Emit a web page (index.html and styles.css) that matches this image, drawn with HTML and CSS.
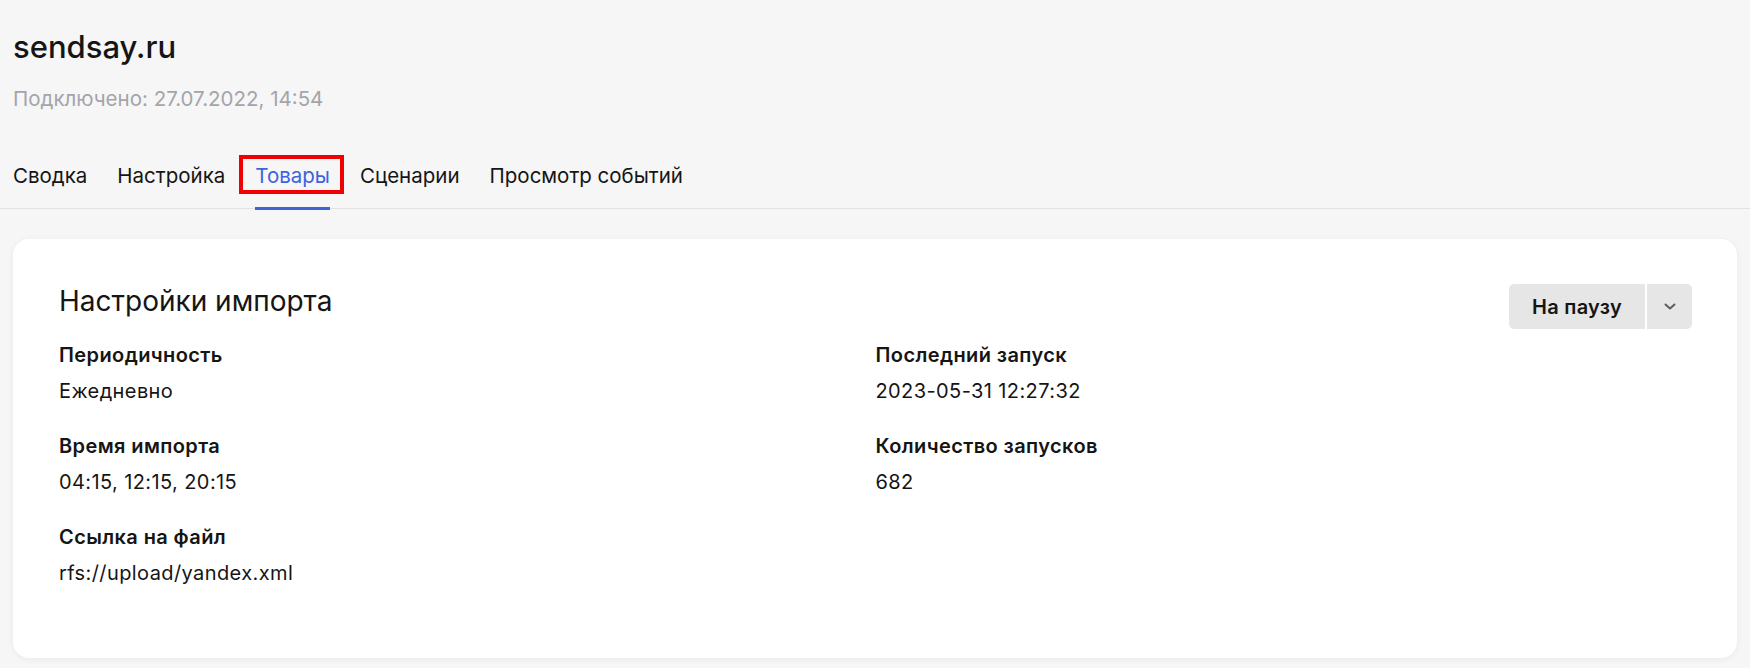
FILE: index.html
```html
<!DOCTYPE html>
<html lang="ru">
<head>
  <meta charset="UTF-8">
  <title>sendsay.ru — Товары</title>
  <link rel="stylesheet" href="styles.css">
</head>
<body>

  <!-- Шапка интеграции -->
  <header class="page-head">
    <h1 class="site-name">sendsay.ru</h1>
    <div class="connected">Подключено: 27.07.2022, 14:54</div>
  </header>

  <nav class="tabs">
    <a class="tab"><span class="tab-label">Сводка</span></a>
    <a class="tab"><span class="tab-label">Настройка</span></a>
    <a class="tab active"><span class="tab-label marked">Товары</span></a>
    <a class="tab"><span class="tab-label">Сценарии</span></a>
    <a class="tab"><span class="tab-label">Просмотр событий</span></a>
  </nav>

  <main class="content">
    <section class="card">
      <div class="card-head">
        <h2 class="card-title">Настройки импорта</h2>
        <div class="split-btn">
          <button class="btn-main">На паузу</button>
          <button class="btn-arrow" aria-label="Ещё">
            <svg width="14" height="9" viewBox="0 0 14 9">
              <path d="M2.5 2.5 L7 6.5 L11.5 2.5" fill="none" stroke="#5e5e5e" stroke-width="2" stroke-linecap="round" stroke-linejoin="round"/>
            </svg>
          </button>
        </div>
      </div>

      <div class="fields">
        <div class="field">
          <div class="label">Периодичность</div>
          <div class="value">Ежедневно</div>
        </div>
        <div class="field">
          <div class="label">Последний запуск</div>
          <div class="value">2023-05-31 12:27:32</div>
        </div>
        <div class="field">
          <div class="label">Время импорта</div>
          <div class="value">04:15, 12:15, 20:15</div>
        </div>
        <div class="field">
          <div class="label">Количество запусков</div>
          <div class="value">682</div>
        </div>
        <div class="field">
          <div class="label">Ссылка на файл</div>
          <div class="value">rfs://upload/yandex.xml</div>
        </div>
      </div>
    </section>
  </main>

</body>
</html>
```

FILE: styles.css
```css
body {
  margin: 0;
  background-color: #f6f6f6;
  font-family: Inter, "Noto Sans", sans-serif;
  color: #151515;
}
.page-head {
  padding: 29px 13px 0;
}
.site-name {
  margin: 0;
  font-size: 31px;
  line-height: 36px;
  font-weight: 500;
}
.connected {
  margin-top: 22px;
  font-size: 20.5px;
  line-height: 24px;
  color: #a4a4ab;
}
.tabs {
  display: flex;
  gap: 30px;
  margin-top: 53px;
  padding: 0 13px;
  border-bottom: 1px solid #e2e2e2;
}
.tab {
  padding-bottom: 19px;
  margin-bottom: -2px;
  border-bottom: 3px solid transparent;
  font-size: 20.5px;
  line-height: 24px;
  color: #151515;
}
.tab.active {
  color: #3d63dd;
  border-bottom-color: #3d63dd;
}
.tab-label {
  display: block;
}
.marked {
  position: relative;
}
/* красная рамка-выделение */
.marked::after {
  content: "";
  position: absolute;
  left: -16px;
  right: -14px;
  top: -9px;
  bottom: -6px;
  border: 4px solid #f00000;
}
.content {
  padding: 30px 13px 11px;
}
.card {
  background-color: #fff;
  border-radius: 16px;
  box-shadow: 0 1px 6px rgba(0, 0, 0, 0.06);
  padding: 45px 45px 72px 46px;
}
.card-head {
  display: flex;
  justify-content: space-between;
  align-items: flex-start;
}
.card-title {
  margin: 1px 0 0;
  font-size: 28px;
  line-height: 32px;
  font-weight: 400;
}
.split-btn {
  display: flex;
  gap: 2px;
}
.split-btn button {
  height: 45px;
  border: none;
  background-color: #e6e6e6;
  font-family: inherit;
  color: #151515;
}
.btn-main {
  width: 136px;
  border-radius: 5px 0 0 5px;
  font-size: 20px;
  font-weight: 600;
  letter-spacing: 0.3px;
}
.btn-arrow {
  width: 45px;
  border-radius: 0 5px 5px 0;
  display: flex;
  align-items: center;
  justify-content: center;
}
.fields {
  display: grid;
  grid-template-columns: 1fr 1fr;
  row-gap: 29px;
  margin-top: 13px;
}
.label {
  font-size: 20px;
  line-height: 26px;
  font-weight: 600;
  letter-spacing: 0.4px;
}
.value {
  margin-top: 10px;
  font-size: 20px;
  line-height: 26px;
  letter-spacing: 0.4px;
}
```
